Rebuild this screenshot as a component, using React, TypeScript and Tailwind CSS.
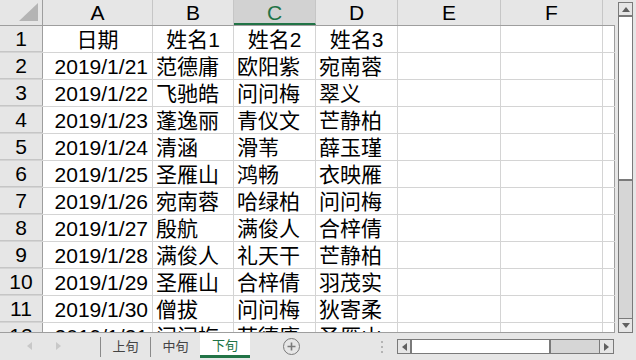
import { FC } from "react";

// column widths incl. right border: row header, A..F, G (cut off)
const COLS = [
  { key: "A", w: "w-[110px]" },
  { key: "B", w: "w-[81px]" },
  { key: "C", w: "w-[82px]" },
  { key: "D", w: "w-[82px]" },
  { key: "E", w: "w-[103px]" },
  { key: "F", w: "w-[102px]" },
];

const ROWS: string[][] = [
  ["日期", "姓名1", "姓名2", "姓名3"],
  ["2019/1/21", "范德庸", "欧阳紫", "宛南蓉"],
  ["2019/1/22", "飞驰皓", "问问梅", "翠义"],
  ["2019/1/23", "蓬逸丽", "青仪文", "芒静柏"],
  ["2019/1/24", "清涵", "滑苇", "薛玉瑾"],
  ["2019/1/25", "圣雁山", "鸿畅", "衣映雁"],
  ["2019/1/26", "宛南蓉", "哈绿柏", "问问梅"],
  ["2019/1/27", "殷航", "满俊人", "合梓倩"],
  ["2019/1/28", "满俊人", "礼天干", "芒静柏"],
  ["2019/1/29", "圣雁山", "合梓倩", "羽茂实"],
  ["2019/1/30", "僧拔", "问问梅", "狄寄柔"],
  ["2019/1/31", "问问梅", "范德庸", "圣雁山"],
];

const FONT = "font-['Liberation_Sans','Noto_Sans_CJK_SC',sans-serif]";

const Cell: FC<{ w: string; text?: string; align?: string }> = ({
  w,
  text,
  align = "justify-start",
}) => (
  <div
    className={`${w} shrink-0 h-full flex items-center ${align} px-[3px] border-r border-[#d4d4d4] overflow-hidden whitespace-nowrap`}
  >
    {text}
  </div>
);

const Sheet: FC = () => (
  <div className={`w-[617px] h-[333px] flex flex-col ${FONT} text-[21px] leading-none text-black`}>
    {/* Column headers */}
    <div className="h-[26px] shrink-0 flex border-b border-[#9e9e9e] w-[615px]">
      <div className="w-[43px] shrink-0 h-full border-r border-[#9e9e9e] flex items-end justify-end pr-[4px] pb-[4px]">
        <svg width="19" height="18" viewBox="0 0 19 18">
          <polygon points="19,0 19,18 0,18" fill="#b4b4b4" />
        </svg>
      </div>
      {COLS.map((c) => (
        <div
          key={c.key}
          className={`${c.w} shrink-0 h-full flex items-center justify-center border-r ${
            c.key === "C"
              ? "bg-[#d2d2d2] text-[#217346] border-b-2 border-b-[#217346] border-r-[#c6c6c6] pt-[2px]"
              : "border-[#c6c6c6]"
          }`}
        >
          {c.key}
        </div>
      ))}
    </div>

    {/* Rows */}
    <div className="flex-1 overflow-hidden border-b border-[#9e9e9e] w-[615px]">
      {ROWS.map((r, i) => (
        <div key={i} className="h-[27px] flex border-b border-[#d4d4d4] bg-white">
          <div className="w-[43px] shrink-0 h-full bg-[#e6e6e6] border-r border-[#9e9e9e] flex items-center justify-center -mb-px border-b border-b-[#c6c6c6]">
            {i + 1}
          </div>
          {i === 0 ? (
            <>
              <Cell w={COLS[0].w} text={r[0]} align="justify-center" />
              <Cell w={COLS[1].w} text={r[1]} align="justify-center" />
              <Cell w={COLS[2].w} text={r[2]} align="justify-center" />
              <Cell w={COLS[3].w} text={r[3]} align="justify-center" />
            </>
          ) : (
            <>
              <Cell w={COLS[0].w} text={r[0]} align="justify-end pr-[4px]" />
              <Cell w={COLS[1].w} text={r[1]} />
              <Cell w={COLS[2].w} text={r[2]} />
              <Cell w={COLS[3].w} text={r[3]} />
            </>
          )}
          <Cell w={COLS[4].w} />
          <Cell w={COLS[5].w} />
          <div className="flex-1 h-full border-r border-[#9e9e9e]" />
        </div>
      ))}
    </div>
  </div>
);

const VScroll: FC = () => (
  <div className="flex-1 pt-[2px] pl-[1px]">
    <div className="w-[15px] h-[331px] border border-[#7a7a7a] flex flex-col">
      <div className="h-[14px] border-b-2 border-[#7a7a7a] flex items-center justify-center">
        <svg width="8" height="5" viewBox="0 0 8 5">
          <polygon points="4,0 8,5 0,5" fill="#606060" />
        </svg>
      </div>
      <div className="h-[164px] bg-white border-b-2 border-[#7a7a7a]" />
      <div className="flex-1 bg-[#d6d6d6]" />
      <div className="h-[14px] border-t border-[#7a7a7a] bg-[#e6e6e6] flex items-center justify-center">
        <svg width="8" height="5" viewBox="0 0 8 5">
          <polygon points="0,0 8,0 4,5" fill="#606060" />
        </svg>
      </div>
    </div>
  </div>
);

const TabBar: FC = () => (
  <div className="h-[27px] flex items-start text-[13px] leading-none font-['Noto_Sans_CJK_SC',sans-serif]">
    {/* sheet navigation */}
    <div className="w-[100px] h-full flex items-center pb-[1px]">
      <svg className="ml-[27px]" width="5" height="8" viewBox="0 0 5 8">
        <polygon points="5,0 5,8 0,4" fill="#c8c8c8" />
      </svg>
      <svg className="ml-[24px]" width="5" height="8" viewBox="0 0 5 8">
        <polygon points="0,0 5,4 0,8" fill="#c8c8c8" />
      </svg>
    </div>
    <div className="w-px h-[20px] mt-[4px] bg-[#8a8a8a]" />
    <div className="w-[49px] h-[24px] flex items-center justify-center text-[#444]">上旬</div>
    <div className="w-px h-[20px] mt-[4px] bg-[#8a8a8a]" />
    <div className="w-[49px] h-[24px] flex items-center justify-center text-[#444]">中旬</div>
    <div className="w-[50px] h-[25px] bg-white border-b-[3px] border-[#217346] flex items-center justify-center text-[#217346]">
      下旬
    </div>
    {/* new sheet */}
    <div className="ml-[33px] mt-[5px] w-[17px] h-[17px] rounded-full border-[1.5px] border-[#7a7a7a] flex items-center justify-center">
      <svg width="9" height="9" viewBox="0 0 9 9">
        <path d="M4.5 0.5v8M0.5 4.5h8" stroke="#7a7a7a" strokeWidth="1.6" />
      </svg>
    </div>
    {/* splitter dots */}
    <div className="ml-[81px] mt-[8px] flex flex-col gap-[3px]">
      <div className="w-[2px] h-[2px] bg-[#b4b4b4]" />
      <div className="w-[2px] h-[2px] bg-[#b4b4b4]" />
      <div className="w-[2px] h-[2px] bg-[#b4b4b4]" />
    </div>
    {/* horizontal scrollbar */}
    <div className="ml-[14px] mt-[6px] w-[217px] h-[15px] border border-[#7a7a7a] flex">
      <div className="w-[14px] border-r-2 border-[#7a7a7a] flex items-center justify-center">
        <svg width="5" height="8" viewBox="0 0 5 8">
          <polygon points="5,0 5,8 0,4" fill="#606060" />
        </svg>
      </div>
      <div className="w-[139px] bg-white border-r-2 border-[#7a7a7a]" />
      <div className="flex-1 bg-[#d6d6d6]" />
      <div className="w-[14px] border-l border-[#7a7a7a] bg-[#e6e6e6] flex items-center justify-center">
        <svg width="5" height="8" viewBox="0 0 5 8">
          <polygon points="0,0 5,4 0,8" fill="#606060" />
        </svg>
      </div>
    </div>
  </div>
);

const App: FC = () => (
  <div className="w-[636px] h-[360px] bg-[#e6e6e6] flex flex-col overflow-hidden">
    <div className="flex h-[333px]">
      <Sheet />
      <VScroll />
    </div>
    <TabBar />
  </div>
);

export default App;
